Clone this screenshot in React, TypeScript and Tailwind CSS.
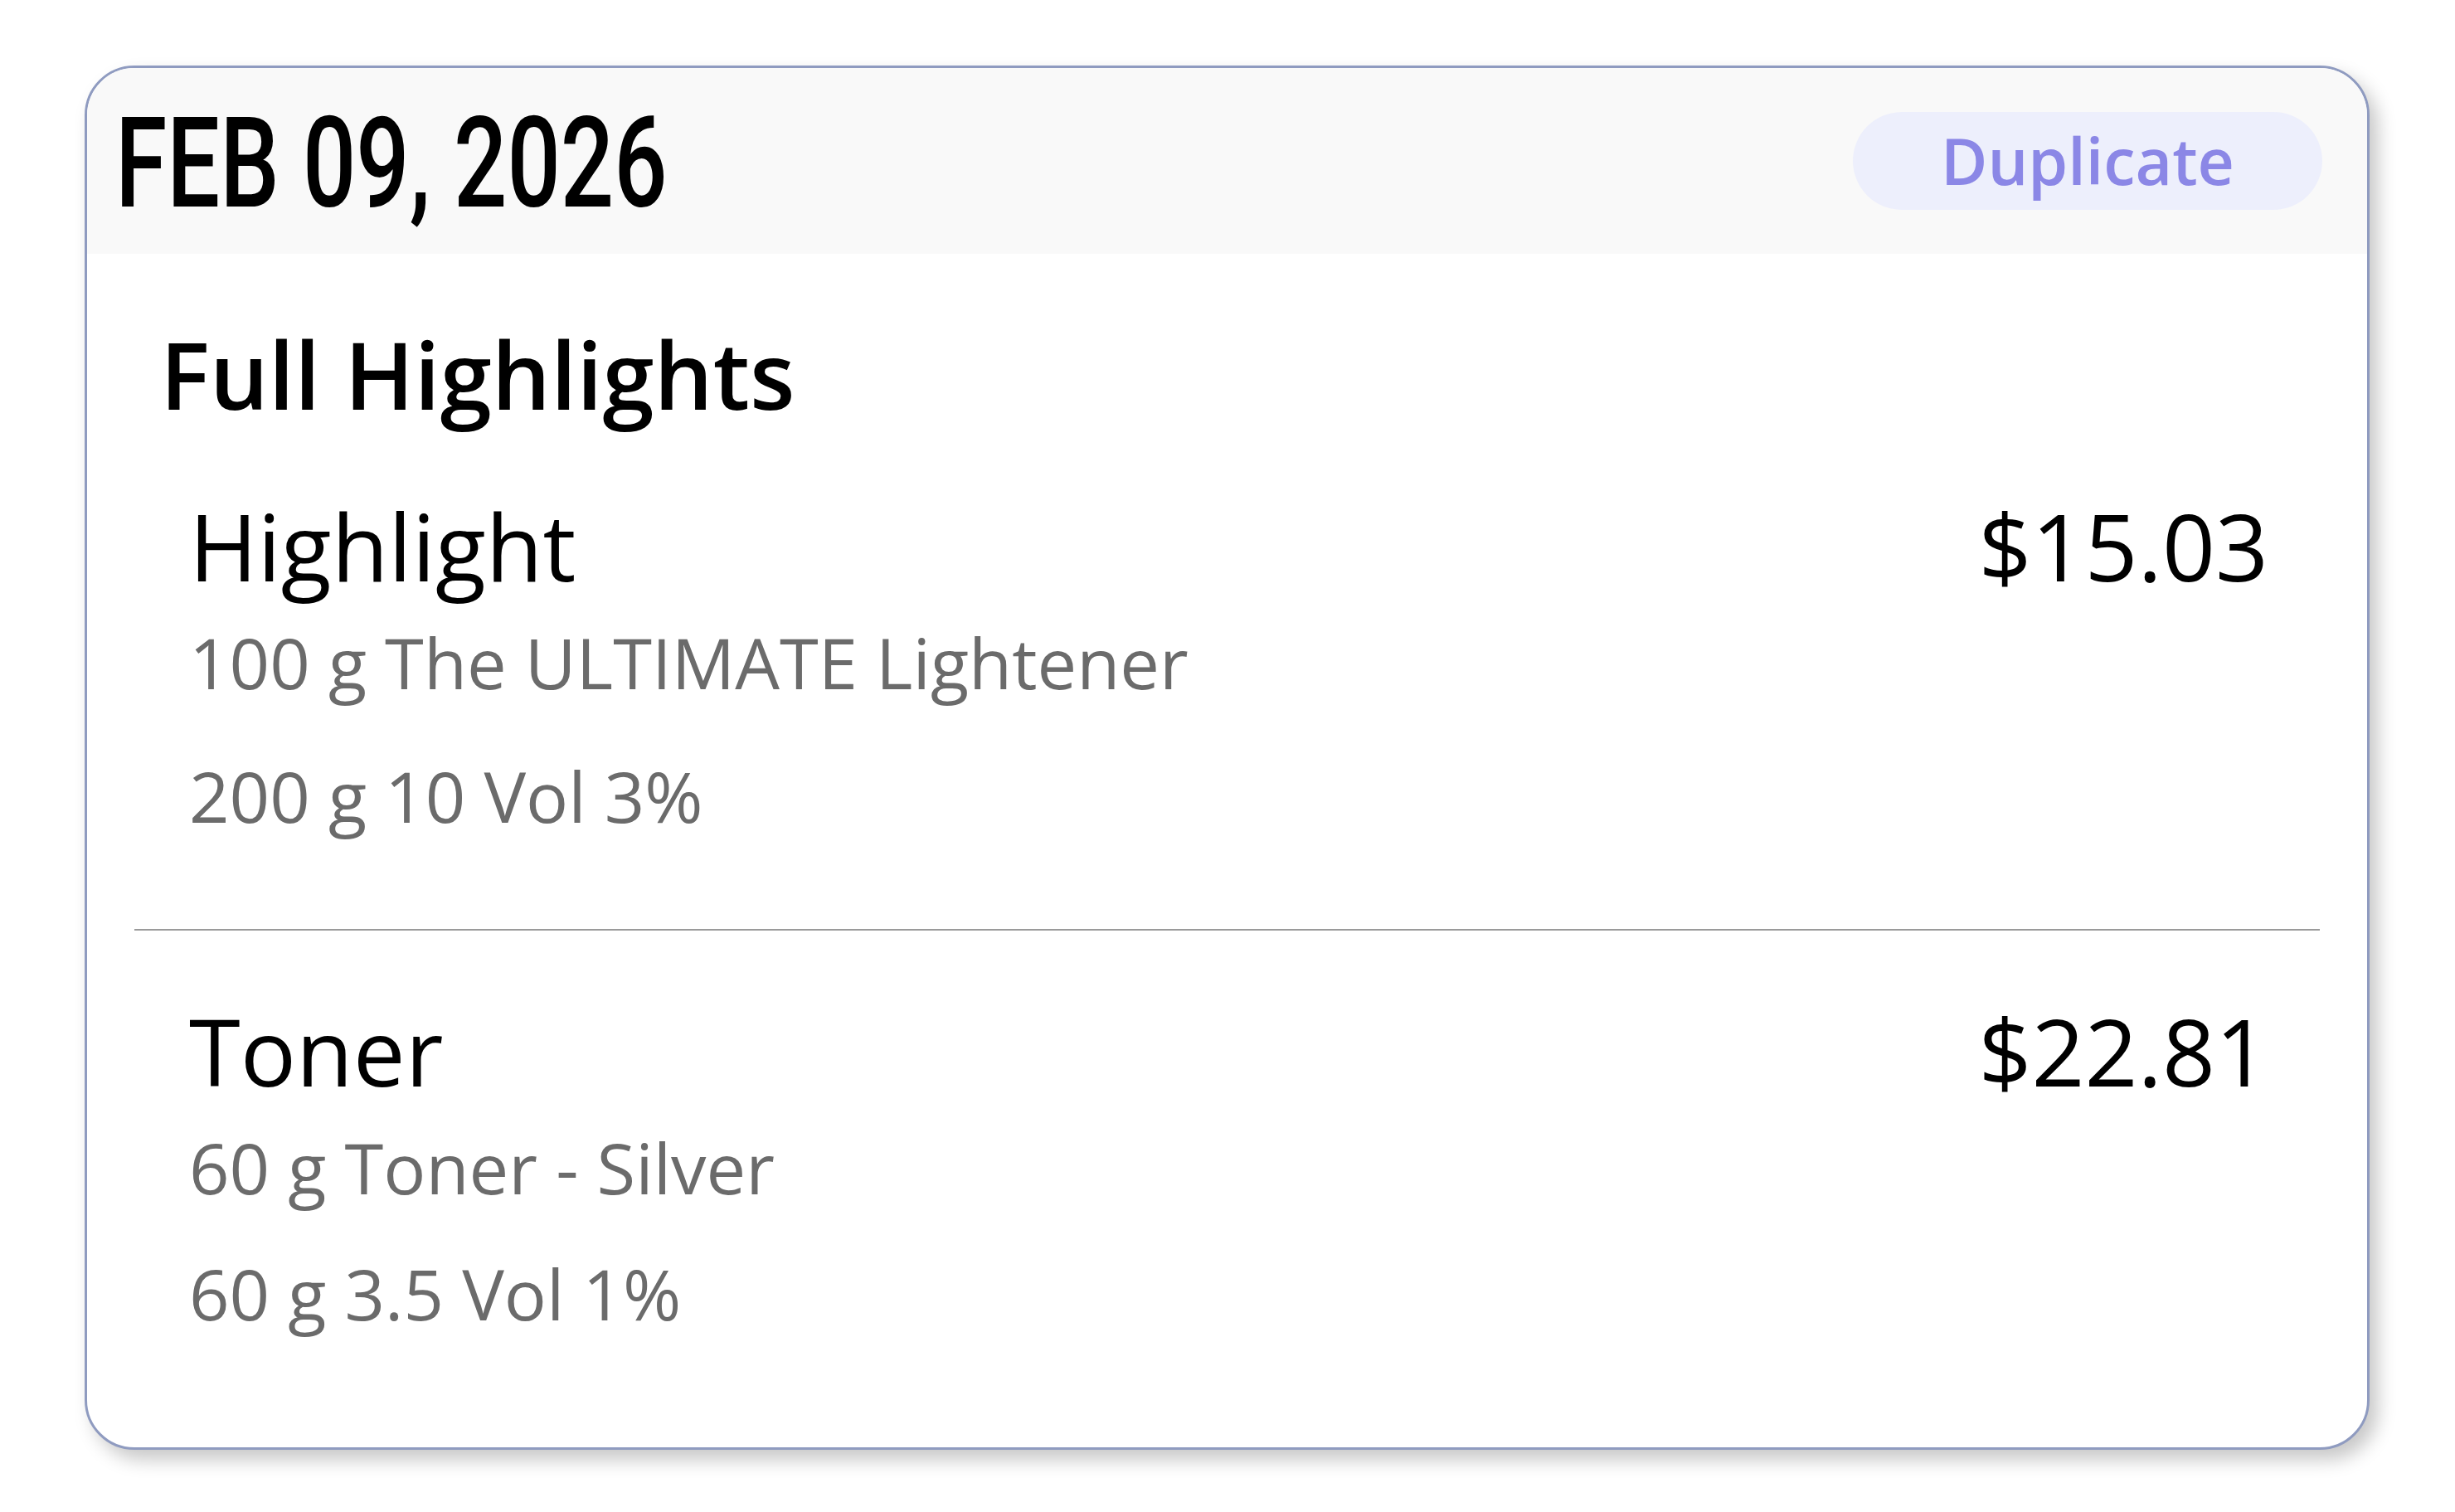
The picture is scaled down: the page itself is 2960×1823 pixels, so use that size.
export default function App() {
  const items = [
    {
      name: "Highlight",
      price: "$15.03",
      lines: ["100 g The ULTIMATE Lightener", "200 g 10 Vol 3%"],
    },
    {
      name: "Toner",
      price: "$22.81",
      lines: ["60 g Toner - Silver", "60 g 3.5 Vol 1%"],
    },
  ];

  return (
    <div className="min-h-[1823px] w-full bg-white pl-[102px] pr-[103px] pt-[79px] font-['Open_Sans',sans-serif]">
      <div className="overflow-hidden rounded-[60px] border-[3px] border-[#8f9bc0] bg-white shadow-[10px_12px_22px_rgba(0,0,0,0.22)]">
        <div className="flex h-[224px] items-center justify-between bg-[#f9f9f9] pl-[34px] pr-[54px]">
          <div className="mt-[4px] w-[680px] overflow-visible">
            <span className="inline-block origin-left scale-x-[0.74] whitespace-nowrap font-['Roboto',sans-serif] text-[153px] font-medium leading-none text-black">
              FEB 09, 2026
            </span>
          </div>
          <button className="flex h-[118px] w-[566px] items-center justify-center rounded-full bg-[#edeffc] text-[77px] font-semibold text-[#8b87e6]">
            Duplicate
          </button>
        </div>

        <div className="px-[57px] pb-[128px]">
          <div className="pl-[31px] pt-[70px] text-[112px] font-semibold leading-[150px] text-black">
            Full Highlights
          </div>

          {items.map((item, i) => (
            <div key={item.name}>
              {i > 0 && <div className="h-[2px] w-full bg-[#9a9a9a]" />}
              <div
                className={
                  i === 0
                    ? "pb-[103px] pl-[66px] pr-[62px] pt-[57px]"
                    : "pl-[66px] pr-[62px] pt-[70px]"
                }
              >
                <div className="flex items-start justify-between">
                  <div className="text-[112px] leading-[150px] text-black">{item.name}</div>
                  <div className="text-[112px] leading-[150px] text-black">{item.price}</div>
                </div>
                <div className="mt-[7px] text-[85px] leading-[116px] text-[#6b6b6b]">
                  {item.lines[0]}
                </div>
                <div
                  className={
                    i === 0
                      ? "mt-[45px] text-[85px] leading-[116px] text-[#6b6b6b]"
                      : "mt-[36px] text-[85px] leading-[116px] text-[#6b6b6b]"
                  }
                >
                  {item.lines[1]}
                </div>
              </div>
            </div>
          ))}
        </div>
      </div>
    </div>
  );
}
